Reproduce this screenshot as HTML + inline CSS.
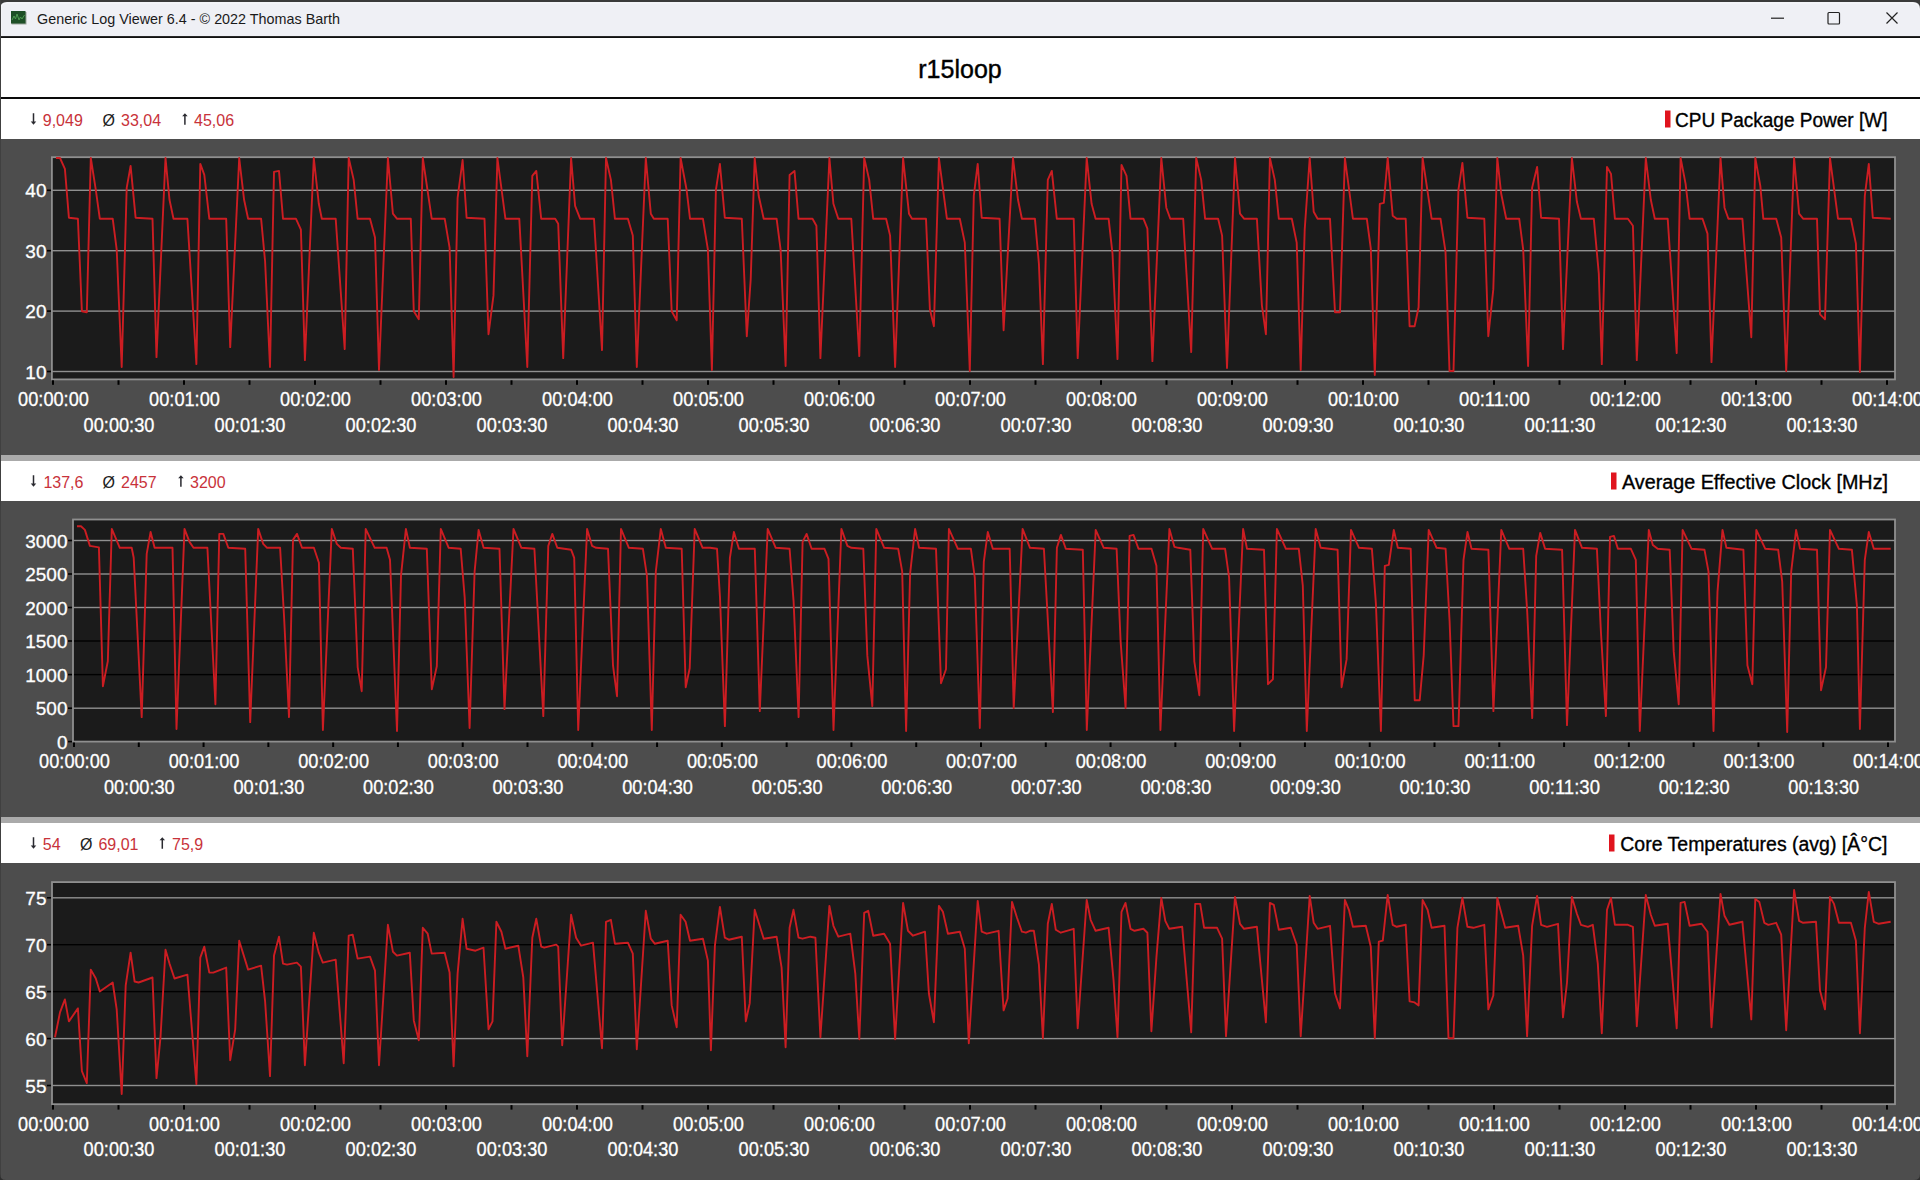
<!DOCTYPE html>
<html><head><meta charset="utf-8"><style>
html,body{margin:0;padding:0;width:1920px;height:1180px;overflow:hidden;background:#4d4d4d;}
svg{position:absolute;left:0;top:0;display:block;}
</style></head><body>
<svg width="1920" height="1180" viewBox="0 0 1920 1180">
<rect x="0" y="0" width="1920" height="1180" fill="#4d4d4d"/>
<rect x="0" y="0" width="1920" height="12" fill="#3a3a3a"/>
<path d="M0 36 V9 Q0 2 7 2 H1913 Q1920 2 1920 9 V36 Z" fill="#eff0f5"/>
<path d="M1 36 V9.5 Q1 3 7.5 3 H1912 Q1919 3 1919 9.5" fill="none" stroke="#ffffff" stroke-width="0.8" opacity="0.7"/>
<rect x="0" y="36.4" width="1920" height="1.6" fill="#111"/>
<rect x="0" y="38" width="1920" height="59" fill="#ffffff"/>
<rect x="0" y="97" width="1920" height="2" fill="#0a0a0a"/>
<rect x="0" y="99" width="1920" height="40" fill="#ffffff"/>
<rect x="0" y="461" width="1920" height="40" fill="#ffffff"/>
<rect x="0" y="455" width="1920" height="6" fill="#aaaaaa"/>
<rect x="0" y="823" width="1920" height="40" fill="#ffffff"/>
<rect x="0" y="817" width="1920" height="6" fill="#aaaaaa"/>
<rect x="0" y="0" width="1" height="1180" fill="#404040"/>
<path d="M0 1180 V1174 Q0 1180 6 1180 Z" fill="#2e2e2e"/>
<path d="M1920 1180 V1174 Q1920 1180 1914 1180 Z" fill="#2e2e2e"/>
<rect x="11.5" y="12" width="15" height="12.5" fill="#9aa39a"/>
<rect x="11" y="11" width="14.5" height="12.5" fill="#1d4f26"/>
<path d="M12 20 L14 16 L15.5 19 L17 14 L19 20 L20.5 17 L22 19 L24.5 15" fill="none" stroke="#4f9c52" stroke-width="1"/>
<text x="37" y="24" font-size="15" fill="#1a1a1a" textLength="303" lengthAdjust="spacingAndGlyphs" font-family='"Liberation Sans", sans-serif'>Generic Log Viewer 6.4 - © 2022 Thomas Barth</text>
<rect x="1771" y="17.6" width="13" height="1.2" fill="#222"/>
<rect x="1828" y="12.5" width="11.5" height="11.5" fill="none" stroke="#222" stroke-width="1.2" rx="1"/>
<path d="M1886.5 12.5 L1897.5 23.5 M1897.5 12.5 L1886.5 23.5" stroke="#222" stroke-width="1.2"/>
<text x="960" y="77.5" font-size="25" text-anchor="middle" fill="#000" stroke="#000" stroke-width="0.4" font-family='"Liberation Sans", sans-serif'>r15loop</text>
<path d="M32.75 113.2 h1.5 v8.4 h2 l-2.75 3.1 l-2.75 -3.1 h2 z" fill="#2a2a30"/>
<text x="42.75" y="125.6" font-size="16" fill="#c8323a" font-family='"Liberation Sans", sans-serif'>9,049</text>
<text x="102.5" y="125.6" font-size="16" fill="#222" font-family='"Liberation Sans", sans-serif'>Ø</text>
<text x="121" y="125.6" font-size="16" fill="#c8323a" font-family='"Liberation Sans", sans-serif'>33,04</text>
<path d="M184.15 124.7 h1.5 v-8.4 h2 l-2.75 -3.1 l-2.75 3.1 h2 z" fill="#2a2a30"/>
<text x="194" y="125.6" font-size="16" fill="#c8323a" font-family='"Liberation Sans", sans-serif'>45,06</text>
<text x="1675" y="126.8" font-size="20" textLength="212.5" lengthAdjust="spacingAndGlyphs" fill="#000" stroke="#000" stroke-width="0.35" font-family='"Liberation Sans", sans-serif'>CPU Package Power [W]</text>
<rect x="1665" y="110.5" width="5.5" height="17" fill="#e0141e"/>
<rect x="51.9" y="157.2" width="1843.1" height="222.2" fill="#1b1b1b"/>
<rect x="51.9" y="189.60000000000002" width="1843.1" height="1.4" fill="#8f8f8f"/>
<rect x="46.9" y="189.5" width="4.5" height="1.6" fill="#000"/>
<text x="46.5" y="197.3" font-size="19" text-anchor="end" fill="#fff" stroke="#fff" stroke-width="0.3" font-family='"Liberation Sans", sans-serif'>40</text>
<rect x="51.9" y="250.0" width="1843.1" height="1.4" fill="#8f8f8f"/>
<rect x="46.9" y="249.89999999999998" width="4.5" height="1.6" fill="#000"/>
<text x="46.5" y="257.7" font-size="19" text-anchor="end" fill="#fff" stroke="#fff" stroke-width="0.3" font-family='"Liberation Sans", sans-serif'>30</text>
<rect x="51.9" y="310.40000000000003" width="1843.1" height="1.4" fill="#8f8f8f"/>
<rect x="46.9" y="310.3" width="4.5" height="1.6" fill="#000"/>
<text x="46.5" y="318.1" font-size="19" text-anchor="end" fill="#fff" stroke="#fff" stroke-width="0.3" font-family='"Liberation Sans", sans-serif'>20</text>
<rect x="51.9" y="370.8" width="1843.1" height="1.4" fill="#8f8f8f"/>
<rect x="46.9" y="370.7" width="4.5" height="1.6" fill="#000"/>
<text x="46.5" y="378.5" font-size="19" text-anchor="end" fill="#fff" stroke="#fff" stroke-width="0.3" font-family='"Liberation Sans", sans-serif'>10</text>
<rect x="51.9" y="157.2" width="1843.1" height="222.2" fill="none" stroke="#8f8f8f" stroke-width="1.8"/>
<rect x="52.0" y="380.29999999999995" width="2" height="4.5" fill="#000"/>
<text x="53.5" y="406.2" font-size="19.5" text-anchor="middle" textLength="70.8" lengthAdjust="spacingAndGlyphs" fill="#fff" stroke="#fff" stroke-width="0.3" font-family='"Liberation Sans", sans-serif'>00:00:00</text>
<rect x="117.5" y="380.29999999999995" width="2" height="4.5" fill="#000"/>
<text x="119.0" y="431.5" font-size="19.5" text-anchor="middle" textLength="70.8" lengthAdjust="spacingAndGlyphs" fill="#fff" stroke="#fff" stroke-width="0.3" font-family='"Liberation Sans", sans-serif'>00:00:30</text>
<rect x="183.0" y="380.29999999999995" width="2" height="4.5" fill="#000"/>
<text x="184.5" y="406.2" font-size="19.5" text-anchor="middle" textLength="70.8" lengthAdjust="spacingAndGlyphs" fill="#fff" stroke="#fff" stroke-width="0.3" font-family='"Liberation Sans", sans-serif'>00:01:00</text>
<rect x="248.5" y="380.29999999999995" width="2" height="4.5" fill="#000"/>
<text x="250.0" y="431.5" font-size="19.5" text-anchor="middle" textLength="70.8" lengthAdjust="spacingAndGlyphs" fill="#fff" stroke="#fff" stroke-width="0.3" font-family='"Liberation Sans", sans-serif'>00:01:30</text>
<rect x="314.0" y="380.29999999999995" width="2" height="4.5" fill="#000"/>
<text x="315.5" y="406.2" font-size="19.5" text-anchor="middle" textLength="70.8" lengthAdjust="spacingAndGlyphs" fill="#fff" stroke="#fff" stroke-width="0.3" font-family='"Liberation Sans", sans-serif'>00:02:00</text>
<rect x="379.5" y="380.29999999999995" width="2" height="4.5" fill="#000"/>
<text x="381.0" y="431.5" font-size="19.5" text-anchor="middle" textLength="70.8" lengthAdjust="spacingAndGlyphs" fill="#fff" stroke="#fff" stroke-width="0.3" font-family='"Liberation Sans", sans-serif'>00:02:30</text>
<rect x="445.0" y="380.29999999999995" width="2" height="4.5" fill="#000"/>
<text x="446.5" y="406.2" font-size="19.5" text-anchor="middle" textLength="70.8" lengthAdjust="spacingAndGlyphs" fill="#fff" stroke="#fff" stroke-width="0.3" font-family='"Liberation Sans", sans-serif'>00:03:00</text>
<rect x="510.5" y="380.29999999999995" width="2" height="4.5" fill="#000"/>
<text x="512.0" y="431.5" font-size="19.5" text-anchor="middle" textLength="70.8" lengthAdjust="spacingAndGlyphs" fill="#fff" stroke="#fff" stroke-width="0.3" font-family='"Liberation Sans", sans-serif'>00:03:30</text>
<rect x="576.0" y="380.29999999999995" width="2" height="4.5" fill="#000"/>
<text x="577.5" y="406.2" font-size="19.5" text-anchor="middle" textLength="70.8" lengthAdjust="spacingAndGlyphs" fill="#fff" stroke="#fff" stroke-width="0.3" font-family='"Liberation Sans", sans-serif'>00:04:00</text>
<rect x="641.5" y="380.29999999999995" width="2" height="4.5" fill="#000"/>
<text x="643.0" y="431.5" font-size="19.5" text-anchor="middle" textLength="70.8" lengthAdjust="spacingAndGlyphs" fill="#fff" stroke="#fff" stroke-width="0.3" font-family='"Liberation Sans", sans-serif'>00:04:30</text>
<rect x="707.0" y="380.29999999999995" width="2" height="4.5" fill="#000"/>
<text x="708.5" y="406.2" font-size="19.5" text-anchor="middle" textLength="70.8" lengthAdjust="spacingAndGlyphs" fill="#fff" stroke="#fff" stroke-width="0.3" font-family='"Liberation Sans", sans-serif'>00:05:00</text>
<rect x="772.5" y="380.29999999999995" width="2" height="4.5" fill="#000"/>
<text x="774.0" y="431.5" font-size="19.5" text-anchor="middle" textLength="70.8" lengthAdjust="spacingAndGlyphs" fill="#fff" stroke="#fff" stroke-width="0.3" font-family='"Liberation Sans", sans-serif'>00:05:30</text>
<rect x="838.0" y="380.29999999999995" width="2" height="4.5" fill="#000"/>
<text x="839.5" y="406.2" font-size="19.5" text-anchor="middle" textLength="70.8" lengthAdjust="spacingAndGlyphs" fill="#fff" stroke="#fff" stroke-width="0.3" font-family='"Liberation Sans", sans-serif'>00:06:00</text>
<rect x="903.5" y="380.29999999999995" width="2" height="4.5" fill="#000"/>
<text x="905.0" y="431.5" font-size="19.5" text-anchor="middle" textLength="70.8" lengthAdjust="spacingAndGlyphs" fill="#fff" stroke="#fff" stroke-width="0.3" font-family='"Liberation Sans", sans-serif'>00:06:30</text>
<rect x="969.0" y="380.29999999999995" width="2" height="4.5" fill="#000"/>
<text x="970.5" y="406.2" font-size="19.5" text-anchor="middle" textLength="70.8" lengthAdjust="spacingAndGlyphs" fill="#fff" stroke="#fff" stroke-width="0.3" font-family='"Liberation Sans", sans-serif'>00:07:00</text>
<rect x="1034.5" y="380.29999999999995" width="2" height="4.5" fill="#000"/>
<text x="1036.0" y="431.5" font-size="19.5" text-anchor="middle" textLength="70.8" lengthAdjust="spacingAndGlyphs" fill="#fff" stroke="#fff" stroke-width="0.3" font-family='"Liberation Sans", sans-serif'>00:07:30</text>
<rect x="1100.0" y="380.29999999999995" width="2" height="4.5" fill="#000"/>
<text x="1101.5" y="406.2" font-size="19.5" text-anchor="middle" textLength="70.8" lengthAdjust="spacingAndGlyphs" fill="#fff" stroke="#fff" stroke-width="0.3" font-family='"Liberation Sans", sans-serif'>00:08:00</text>
<rect x="1165.5" y="380.29999999999995" width="2" height="4.5" fill="#000"/>
<text x="1167.0" y="431.5" font-size="19.5" text-anchor="middle" textLength="70.8" lengthAdjust="spacingAndGlyphs" fill="#fff" stroke="#fff" stroke-width="0.3" font-family='"Liberation Sans", sans-serif'>00:08:30</text>
<rect x="1231.0" y="380.29999999999995" width="2" height="4.5" fill="#000"/>
<text x="1232.5" y="406.2" font-size="19.5" text-anchor="middle" textLength="70.8" lengthAdjust="spacingAndGlyphs" fill="#fff" stroke="#fff" stroke-width="0.3" font-family='"Liberation Sans", sans-serif'>00:09:00</text>
<rect x="1296.5" y="380.29999999999995" width="2" height="4.5" fill="#000"/>
<text x="1298.0" y="431.5" font-size="19.5" text-anchor="middle" textLength="70.8" lengthAdjust="spacingAndGlyphs" fill="#fff" stroke="#fff" stroke-width="0.3" font-family='"Liberation Sans", sans-serif'>00:09:30</text>
<rect x="1362.0" y="380.29999999999995" width="2" height="4.5" fill="#000"/>
<text x="1363.5" y="406.2" font-size="19.5" text-anchor="middle" textLength="70.8" lengthAdjust="spacingAndGlyphs" fill="#fff" stroke="#fff" stroke-width="0.3" font-family='"Liberation Sans", sans-serif'>00:10:00</text>
<rect x="1427.5" y="380.29999999999995" width="2" height="4.5" fill="#000"/>
<text x="1429.0" y="431.5" font-size="19.5" text-anchor="middle" textLength="70.8" lengthAdjust="spacingAndGlyphs" fill="#fff" stroke="#fff" stroke-width="0.3" font-family='"Liberation Sans", sans-serif'>00:10:30</text>
<rect x="1493.0" y="380.29999999999995" width="2" height="4.5" fill="#000"/>
<text x="1494.5" y="406.2" font-size="19.5" text-anchor="middle" textLength="70.8" lengthAdjust="spacingAndGlyphs" fill="#fff" stroke="#fff" stroke-width="0.3" font-family='"Liberation Sans", sans-serif'>00:11:00</text>
<rect x="1558.5" y="380.29999999999995" width="2" height="4.5" fill="#000"/>
<text x="1560.0" y="431.5" font-size="19.5" text-anchor="middle" textLength="70.8" lengthAdjust="spacingAndGlyphs" fill="#fff" stroke="#fff" stroke-width="0.3" font-family='"Liberation Sans", sans-serif'>00:11:30</text>
<rect x="1624.0" y="380.29999999999995" width="2" height="4.5" fill="#000"/>
<text x="1625.5" y="406.2" font-size="19.5" text-anchor="middle" textLength="70.8" lengthAdjust="spacingAndGlyphs" fill="#fff" stroke="#fff" stroke-width="0.3" font-family='"Liberation Sans", sans-serif'>00:12:00</text>
<rect x="1689.5" y="380.29999999999995" width="2" height="4.5" fill="#000"/>
<text x="1691.0" y="431.5" font-size="19.5" text-anchor="middle" textLength="70.8" lengthAdjust="spacingAndGlyphs" fill="#fff" stroke="#fff" stroke-width="0.3" font-family='"Liberation Sans", sans-serif'>00:12:30</text>
<rect x="1755.0" y="380.29999999999995" width="2" height="4.5" fill="#000"/>
<text x="1756.5" y="406.2" font-size="19.5" text-anchor="middle" textLength="70.8" lengthAdjust="spacingAndGlyphs" fill="#fff" stroke="#fff" stroke-width="0.3" font-family='"Liberation Sans", sans-serif'>00:13:00</text>
<rect x="1820.5" y="380.29999999999995" width="2" height="4.5" fill="#000"/>
<text x="1822.0" y="431.5" font-size="19.5" text-anchor="middle" textLength="70.8" lengthAdjust="spacingAndGlyphs" fill="#fff" stroke="#fff" stroke-width="0.3" font-family='"Liberation Sans", sans-serif'>00:13:30</text>
<rect x="1886.0" y="380.29999999999995" width="2" height="4.5" fill="#000"/>
<text x="1887.5" y="406.2" font-size="19.5" text-anchor="middle" textLength="70.8" lengthAdjust="spacingAndGlyphs" fill="#fff" stroke="#fff" stroke-width="0.3" font-family='"Liberation Sans", sans-serif'>00:14:00</text>
<polyline points="56.0,158.0 60.0,158.0 64.9,168.9 68.9,217.7 77.9,218.7 81.9,311.3 86.8,312.3 90.8,158.0 95.8,189.8 99.8,218.7 112.7,218.7 116.7,249.6 121.7,367.0 126.7,187.8 130.6,165.9 135.6,217.7 152.5,218.7 156.5,357.1 165.5,158.0 169.5,199.8 173.5,218.7 187.4,218.7 196.4,364.1 200.3,163.9 204.3,174.9 209.3,218.7 226.2,218.7 230.2,347.1 239.2,158.0 244.1,199.8 248.1,218.7 261.1,218.7 265.1,261.5 270.0,367.0 274.0,171.9 279.0,170.9 283.0,218.7 295.9,218.7 300.9,229.6 304.9,360.1 313.8,158.0 318.8,203.8 321.8,218.7 335.7,218.7 344.7,349.1 348.7,158.0 353.7,179.9 357.6,218.7 370.0,218.7 375.0,237.6 379.0,370.0 387.9,158.0 392.9,213.7 396.9,218.7 410.8,218.7 413.8,311.3 418.8,319.3 422.8,158.0 431.7,218.7 444.7,218.7 449.6,247.6 453.6,377.0 457.6,197.8 462.6,160.0 466.6,217.7 484.5,218.7 488.5,334.2 493.5,295.4 497.4,158.0 505.4,218.7 519.3,218.7 527.3,367.0 532.3,175.9 536.3,170.9 541.2,218.7 555.2,218.7 558.2,223.7 563.2,358.1 571.1,158.0 575.1,205.8 580.1,218.7 594.0,218.7 602.0,350.1 606.0,158.0 610.9,179.9 614.9,218.7 627.9,218.7 632.8,235.6 636.8,367.0 645.8,158.0 650.8,213.7 653.8,218.7 667.7,218.7 671.7,311.3 676.7,320.3 680.6,158.0 686.6,189.8 690.0,218.7 702.9,218.7 707.9,249.6 711.9,370.0 715.9,189.8 719.9,163.9 724.8,217.7 741.8,218.7 746.8,336.2 750.7,279.4 754.7,158.0 758.7,195.8 763.7,218.7 776.6,218.7 780.6,249.6 785.6,366.0 789.6,174.9 794.5,170.9 798.5,218.7 812.5,218.7 816.4,225.7 820.4,358.1 829.4,158.0 833.4,203.8 838.3,218.7 851.3,218.7 859.3,356.1 864.2,158.0 869.2,179.9 873.2,218.7 886.1,218.7 890.1,235.6 895.1,367.0 903.1,158.0 909.0,213.7 912.0,218.7 926.0,218.7 929.9,309.3 933.9,326.2 938.9,158.0 946.9,218.7 959.8,218.7 964.8,242.6 969.8,371.0 973.8,195.8 977.7,163.9 981.7,217.7 999.6,218.7 1003.6,330.2 1013.0,158.0 1018.0,199.8 1021.9,218.7 1034.9,218.7 1038.9,263.5 1042.9,364.1 1047.8,179.9 1051.8,170.9 1056.8,218.7 1073.7,218.7 1077.7,358.1 1086.7,158.0 1091.6,203.8 1095.6,218.7 1108.6,218.7 1112.5,253.5 1117.5,359.1 1121.5,164.9 1126.5,175.9 1130.5,218.7 1143.4,218.7 1147.4,228.7 1152.4,361.1 1161.3,158.0 1166.3,207.7 1170.3,218.7 1183.2,218.7 1191.2,352.1 1196.2,158.0 1201.2,179.9 1205.1,218.7 1218.1,218.7 1222.1,235.6 1227.0,368.0 1235.0,158.0 1240.0,213.7 1244.0,218.7 1256.9,218.7 1261.9,305.3 1265.9,334.2 1269.9,158.0 1274.8,179.9 1278.8,218.7 1291.8,218.7 1296.7,242.6 1300.7,370.0 1304.7,229.6 1309.7,158.0 1313.7,211.7 1317.6,218.7 1330.0,218.7 1335.0,312.3 1340.0,312.3 1344.9,158.0 1352.9,218.7 1366.8,218.7 1370.8,248.6 1374.8,375.0 1379.8,203.8 1383.8,202.8 1387.7,158.0 1392.7,215.7 1396.7,218.7 1405.7,218.7 1409.6,326.2 1414.6,326.2 1418.6,307.3 1422.6,158.0 1431.6,218.7 1440.5,218.7 1445.5,251.6 1449.5,371.0 1453.5,371.0 1458.4,189.8 1462.4,162.9 1467.4,217.7 1484.3,218.7 1488.3,336.2 1493.3,289.4 1497.3,158.0 1501.2,193.8 1506.2,218.7 1519.2,218.7 1523.2,249.6 1528.1,366.0 1532.1,187.8 1537.1,166.9 1541.1,217.7 1559.0,218.7 1563.0,349.1 1571.9,158.0 1576.9,201.8 1580.9,218.7 1593.8,218.7 1598.8,273.5 1601.8,364.1 1607.0,166.9 1611.0,173.9 1614.9,218.7 1627.9,218.7 1632.9,225.7 1636.8,360.1 1645.8,158.0 1650.8,199.8 1654.8,218.7 1667.7,218.7 1676.7,353.1 1680.6,158.0 1685.6,183.9 1689.6,218.7 1702.5,218.7 1707.5,233.6 1711.5,362.1 1720.5,158.0 1724.5,207.7 1728.4,218.7 1742.4,218.7 1751.3,337.2 1755.3,158.0 1760.3,185.8 1763.3,218.7 1776.2,218.7 1781.2,237.6 1786.2,371.0 1794.1,158.0 1799.1,213.7 1803.1,218.7 1817.0,218.7 1820.0,314.3 1825.0,319.3 1830.0,158.0 1838.0,218.7 1850.9,218.7 1855.9,243.6 1859.9,372.0 1864.8,195.8 1868.8,163.9 1872.8,217.7 1890.7,218.7" fill="none" stroke="#cc1d22" stroke-width="1.9" stroke-linejoin="round"/>
<path d="M32.75 475.2 h1.5 v8.4 h2 l-2.75 3.1 l-2.75 -3.1 h2 z" fill="#2a2a30"/>
<text x="43.4" y="487.6" font-size="16" fill="#c8323a" font-family='"Liberation Sans", sans-serif'>137,6</text>
<text x="102.5" y="487.6" font-size="16" fill="#222" font-family='"Liberation Sans", sans-serif'>Ø</text>
<text x="121" y="487.6" font-size="16" fill="#c8323a" font-family='"Liberation Sans", sans-serif'>2457</text>
<path d="M180.15 486.7 h1.5 v-8.4 h2 l-2.75 -3.1 l-2.75 3.1 h2 z" fill="#2a2a30"/>
<text x="190" y="487.6" font-size="16" fill="#c8323a" font-family='"Liberation Sans", sans-serif'>3200</text>
<text x="1622" y="488.8" font-size="20" textLength="266" lengthAdjust="spacingAndGlyphs" fill="#000" stroke="#000" stroke-width="0.35" font-family='"Liberation Sans", sans-serif'>Average Effective Clock [MHz]</text>
<rect x="1611" y="472.5" width="5.5" height="17" fill="#e0141e"/>
<rect x="73" y="519.5" width="1822" height="222.10000000000002" fill="#1b1b1b"/>
<rect x="73" y="539.8" width="1822" height="1.4" fill="#8f8f8f"/>
<rect x="68" y="539.7" width="4.5" height="1.6" fill="#000"/>
<text x="67.5" y="547.5" font-size="19" text-anchor="end" fill="#fff" stroke="#fff" stroke-width="0.3" font-family='"Liberation Sans", sans-serif'>3000</text>
<rect x="73" y="573.3" width="1822" height="1.4" fill="#8f8f8f"/>
<rect x="68" y="573.2" width="4.5" height="1.6" fill="#000"/>
<text x="67.5" y="581.0" font-size="19" text-anchor="end" fill="#fff" stroke="#fff" stroke-width="0.3" font-family='"Liberation Sans", sans-serif'>2500</text>
<rect x="73" y="606.8" width="1822" height="1.4" fill="#8f8f8f"/>
<rect x="68" y="606.7" width="4.5" height="1.6" fill="#000"/>
<text x="67.5" y="614.5" font-size="19" text-anchor="end" fill="#fff" stroke="#fff" stroke-width="0.3" font-family='"Liberation Sans", sans-serif'>2000</text>
<rect x="73" y="640.3" width="1822" height="1.4" fill="#000000"/>
<rect x="68" y="640.2" width="4.5" height="1.6" fill="#000"/>
<text x="67.5" y="648.0" font-size="19" text-anchor="end" fill="#fff" stroke="#fff" stroke-width="0.3" font-family='"Liberation Sans", sans-serif'>1500</text>
<rect x="73" y="673.9" width="1822" height="1.4" fill="#000000"/>
<rect x="68" y="673.8000000000001" width="4.5" height="1.6" fill="#000"/>
<text x="67.5" y="681.6" font-size="19" text-anchor="end" fill="#fff" stroke="#fff" stroke-width="0.3" font-family='"Liberation Sans", sans-serif'>1000</text>
<rect x="73" y="707.5" width="1822" height="1.4" fill="#8f8f8f"/>
<rect x="68" y="707.4000000000001" width="4.5" height="1.6" fill="#000"/>
<text x="67.5" y="715.2" font-size="19" text-anchor="end" fill="#fff" stroke="#fff" stroke-width="0.3" font-family='"Liberation Sans", sans-serif'>500</text>
<rect x="68" y="740.8000000000001" width="4.5" height="1.6" fill="#000"/>
<text x="67.5" y="748.6" font-size="19" text-anchor="end" fill="#fff" stroke="#fff" stroke-width="0.3" font-family='"Liberation Sans", sans-serif'>0</text>
<rect x="73" y="519.5" width="1822" height="222.10000000000002" fill="none" stroke="#8f8f8f" stroke-width="1.8"/>
<rect x="73.0" y="742.5" width="2" height="4.5" fill="#000"/>
<text x="74.5" y="768.4" font-size="19.5" text-anchor="middle" textLength="70.8" lengthAdjust="spacingAndGlyphs" fill="#fff" stroke="#fff" stroke-width="0.3" font-family='"Liberation Sans", sans-serif'>00:00:00</text>
<rect x="137.78571428571428" y="742.5" width="2" height="4.5" fill="#000"/>
<text x="139.28571428571428" y="793.7" font-size="19.5" text-anchor="middle" textLength="70.8" lengthAdjust="spacingAndGlyphs" fill="#fff" stroke="#fff" stroke-width="0.3" font-family='"Liberation Sans", sans-serif'>00:00:30</text>
<rect x="202.57142857142858" y="742.5" width="2" height="4.5" fill="#000"/>
<text x="204.07142857142858" y="768.4" font-size="19.5" text-anchor="middle" textLength="70.8" lengthAdjust="spacingAndGlyphs" fill="#fff" stroke="#fff" stroke-width="0.3" font-family='"Liberation Sans", sans-serif'>00:01:00</text>
<rect x="267.3571428571429" y="742.5" width="2" height="4.5" fill="#000"/>
<text x="268.8571428571429" y="793.7" font-size="19.5" text-anchor="middle" textLength="70.8" lengthAdjust="spacingAndGlyphs" fill="#fff" stroke="#fff" stroke-width="0.3" font-family='"Liberation Sans", sans-serif'>00:01:30</text>
<rect x="332.14285714285717" y="742.5" width="2" height="4.5" fill="#000"/>
<text x="333.64285714285717" y="768.4" font-size="19.5" text-anchor="middle" textLength="70.8" lengthAdjust="spacingAndGlyphs" fill="#fff" stroke="#fff" stroke-width="0.3" font-family='"Liberation Sans", sans-serif'>00:02:00</text>
<rect x="396.92857142857144" y="742.5" width="2" height="4.5" fill="#000"/>
<text x="398.42857142857144" y="793.7" font-size="19.5" text-anchor="middle" textLength="70.8" lengthAdjust="spacingAndGlyphs" fill="#fff" stroke="#fff" stroke-width="0.3" font-family='"Liberation Sans", sans-serif'>00:02:30</text>
<rect x="461.7142857142857" y="742.5" width="2" height="4.5" fill="#000"/>
<text x="463.2142857142857" y="768.4" font-size="19.5" text-anchor="middle" textLength="70.8" lengthAdjust="spacingAndGlyphs" fill="#fff" stroke="#fff" stroke-width="0.3" font-family='"Liberation Sans", sans-serif'>00:03:00</text>
<rect x="526.5" y="742.5" width="2" height="4.5" fill="#000"/>
<text x="528.0" y="793.7" font-size="19.5" text-anchor="middle" textLength="70.8" lengthAdjust="spacingAndGlyphs" fill="#fff" stroke="#fff" stroke-width="0.3" font-family='"Liberation Sans", sans-serif'>00:03:30</text>
<rect x="591.2857142857143" y="742.5" width="2" height="4.5" fill="#000"/>
<text x="592.7857142857143" y="768.4" font-size="19.5" text-anchor="middle" textLength="70.8" lengthAdjust="spacingAndGlyphs" fill="#fff" stroke="#fff" stroke-width="0.3" font-family='"Liberation Sans", sans-serif'>00:04:00</text>
<rect x="656.0714285714286" y="742.5" width="2" height="4.5" fill="#000"/>
<text x="657.5714285714286" y="793.7" font-size="19.5" text-anchor="middle" textLength="70.8" lengthAdjust="spacingAndGlyphs" fill="#fff" stroke="#fff" stroke-width="0.3" font-family='"Liberation Sans", sans-serif'>00:04:30</text>
<rect x="720.8571428571429" y="742.5" width="2" height="4.5" fill="#000"/>
<text x="722.3571428571429" y="768.4" font-size="19.5" text-anchor="middle" textLength="70.8" lengthAdjust="spacingAndGlyphs" fill="#fff" stroke="#fff" stroke-width="0.3" font-family='"Liberation Sans", sans-serif'>00:05:00</text>
<rect x="785.6428571428571" y="742.5" width="2" height="4.5" fill="#000"/>
<text x="787.1428571428571" y="793.7" font-size="19.5" text-anchor="middle" textLength="70.8" lengthAdjust="spacingAndGlyphs" fill="#fff" stroke="#fff" stroke-width="0.3" font-family='"Liberation Sans", sans-serif'>00:05:30</text>
<rect x="850.4285714285714" y="742.5" width="2" height="4.5" fill="#000"/>
<text x="851.9285714285714" y="768.4" font-size="19.5" text-anchor="middle" textLength="70.8" lengthAdjust="spacingAndGlyphs" fill="#fff" stroke="#fff" stroke-width="0.3" font-family='"Liberation Sans", sans-serif'>00:06:00</text>
<rect x="915.2142857142857" y="742.5" width="2" height="4.5" fill="#000"/>
<text x="916.7142857142857" y="793.7" font-size="19.5" text-anchor="middle" textLength="70.8" lengthAdjust="spacingAndGlyphs" fill="#fff" stroke="#fff" stroke-width="0.3" font-family='"Liberation Sans", sans-serif'>00:06:30</text>
<rect x="980.0" y="742.5" width="2" height="4.5" fill="#000"/>
<text x="981.5" y="768.4" font-size="19.5" text-anchor="middle" textLength="70.8" lengthAdjust="spacingAndGlyphs" fill="#fff" stroke="#fff" stroke-width="0.3" font-family='"Liberation Sans", sans-serif'>00:07:00</text>
<rect x="1044.7857142857142" y="742.5" width="2" height="4.5" fill="#000"/>
<text x="1046.2857142857142" y="793.7" font-size="19.5" text-anchor="middle" textLength="70.8" lengthAdjust="spacingAndGlyphs" fill="#fff" stroke="#fff" stroke-width="0.3" font-family='"Liberation Sans", sans-serif'>00:07:30</text>
<rect x="1109.5714285714287" y="742.5" width="2" height="4.5" fill="#000"/>
<text x="1111.0714285714287" y="768.4" font-size="19.5" text-anchor="middle" textLength="70.8" lengthAdjust="spacingAndGlyphs" fill="#fff" stroke="#fff" stroke-width="0.3" font-family='"Liberation Sans", sans-serif'>00:08:00</text>
<rect x="1174.357142857143" y="742.5" width="2" height="4.5" fill="#000"/>
<text x="1175.857142857143" y="793.7" font-size="19.5" text-anchor="middle" textLength="70.8" lengthAdjust="spacingAndGlyphs" fill="#fff" stroke="#fff" stroke-width="0.3" font-family='"Liberation Sans", sans-serif'>00:08:30</text>
<rect x="1239.142857142857" y="742.5" width="2" height="4.5" fill="#000"/>
<text x="1240.642857142857" y="768.4" font-size="19.5" text-anchor="middle" textLength="70.8" lengthAdjust="spacingAndGlyphs" fill="#fff" stroke="#fff" stroke-width="0.3" font-family='"Liberation Sans", sans-serif'>00:09:00</text>
<rect x="1303.9285714285713" y="742.5" width="2" height="4.5" fill="#000"/>
<text x="1305.4285714285713" y="793.7" font-size="19.5" text-anchor="middle" textLength="70.8" lengthAdjust="spacingAndGlyphs" fill="#fff" stroke="#fff" stroke-width="0.3" font-family='"Liberation Sans", sans-serif'>00:09:30</text>
<rect x="1368.7142857142858" y="742.5" width="2" height="4.5" fill="#000"/>
<text x="1370.2142857142858" y="768.4" font-size="19.5" text-anchor="middle" textLength="70.8" lengthAdjust="spacingAndGlyphs" fill="#fff" stroke="#fff" stroke-width="0.3" font-family='"Liberation Sans", sans-serif'>00:10:00</text>
<rect x="1433.5" y="742.5" width="2" height="4.5" fill="#000"/>
<text x="1435.0" y="793.7" font-size="19.5" text-anchor="middle" textLength="70.8" lengthAdjust="spacingAndGlyphs" fill="#fff" stroke="#fff" stroke-width="0.3" font-family='"Liberation Sans", sans-serif'>00:10:30</text>
<rect x="1498.2857142857142" y="742.5" width="2" height="4.5" fill="#000"/>
<text x="1499.7857142857142" y="768.4" font-size="19.5" text-anchor="middle" textLength="70.8" lengthAdjust="spacingAndGlyphs" fill="#fff" stroke="#fff" stroke-width="0.3" font-family='"Liberation Sans", sans-serif'>00:11:00</text>
<rect x="1563.0714285714287" y="742.5" width="2" height="4.5" fill="#000"/>
<text x="1564.5714285714287" y="793.7" font-size="19.5" text-anchor="middle" textLength="70.8" lengthAdjust="spacingAndGlyphs" fill="#fff" stroke="#fff" stroke-width="0.3" font-family='"Liberation Sans", sans-serif'>00:11:30</text>
<rect x="1627.857142857143" y="742.5" width="2" height="4.5" fill="#000"/>
<text x="1629.357142857143" y="768.4" font-size="19.5" text-anchor="middle" textLength="70.8" lengthAdjust="spacingAndGlyphs" fill="#fff" stroke="#fff" stroke-width="0.3" font-family='"Liberation Sans", sans-serif'>00:12:00</text>
<rect x="1692.642857142857" y="742.5" width="2" height="4.5" fill="#000"/>
<text x="1694.142857142857" y="793.7" font-size="19.5" text-anchor="middle" textLength="70.8" lengthAdjust="spacingAndGlyphs" fill="#fff" stroke="#fff" stroke-width="0.3" font-family='"Liberation Sans", sans-serif'>00:12:30</text>
<rect x="1757.4285714285713" y="742.5" width="2" height="4.5" fill="#000"/>
<text x="1758.9285714285713" y="768.4" font-size="19.5" text-anchor="middle" textLength="70.8" lengthAdjust="spacingAndGlyphs" fill="#fff" stroke="#fff" stroke-width="0.3" font-family='"Liberation Sans", sans-serif'>00:13:00</text>
<rect x="1822.2142857142858" y="742.5" width="2" height="4.5" fill="#000"/>
<text x="1823.7142857142858" y="793.7" font-size="19.5" text-anchor="middle" textLength="70.8" lengthAdjust="spacingAndGlyphs" fill="#fff" stroke="#fff" stroke-width="0.3" font-family='"Liberation Sans", sans-serif'>00:13:30</text>
<rect x="1887.0" y="742.5" width="2" height="4.5" fill="#000"/>
<text x="1888.5" y="768.4" font-size="19.5" text-anchor="middle" textLength="70.8" lengthAdjust="spacingAndGlyphs" fill="#fff" stroke="#fff" stroke-width="0.3" font-family='"Liberation Sans", sans-serif'>00:14:00</text>
<polyline points="77.0,526.3 81.0,526.3 84.9,529.9 89.9,545.9 98.9,547.4 102.9,686.2 107.8,661.3 111.8,528.9 119.8,547.8 131.7,547.8 133.7,557.8 141.7,717.1 146.7,553.8 150.6,531.9 154.6,547.8 172.5,547.8 176.5,729.0 184.5,528.9 189.5,541.9 193.5,547.8 207.4,547.8 215.4,704.2 219.3,533.9 223.3,533.9 228.3,547.8 245.2,548.8 250.2,722.1 258.2,528.9 263.2,543.9 267.1,547.8 280.1,547.8 284.1,617.5 289.0,717.1 293.0,539.9 297.0,533.9 302.0,547.8 313.9,547.8 318.9,562.8 322.9,730.0 331.8,528.9 336.8,543.9 340.8,547.8 352.8,548.8 357.7,667.3 361.7,691.2 365.7,528.9 374.7,547.8 386.6,547.8 390.0,559.8 397.0,731.0 401.0,575.7 405.9,528.9 409.9,547.8 426.8,548.8 431.8,689.2 436.8,666.3 440.8,528.9 448.7,547.8 460.7,548.8 464.7,597.6 469.6,728.0 474.6,571.7 478.6,529.9 483.6,547.8 499.5,548.8 504.5,709.1 513.5,528.9 521.4,547.8 534.4,548.8 543.3,716.1 548.3,545.9 552.3,533.9 557.3,547.8 571.2,549.8 574.2,557.8 578.2,730.0 587.1,528.9 592.1,545.9 596.1,547.8 608.0,548.8 613.0,665.3 617.0,696.2 621.0,528.9 628.9,547.8 642.9,548.8 646.9,575.7 651.8,730.0 655.8,571.7 660.8,528.9 665.8,547.8 681.7,548.8 685.7,687.2 689.7,668.3 694.7,528.9 702.6,547.8 710.0,547.8 717.0,548.8 720.0,597.6 724.9,726.1 729.9,557.8 733.9,531.9 738.9,548.8 754.8,548.8 759.8,711.1 767.7,528.9 775.7,547.8 789.6,548.8 793.6,601.6 798.6,717.1 802.6,541.9 806.6,533.9 811.6,548.8 824.5,548.8 828.5,558.8 833.5,730.0 841.4,528.9 847.4,545.9 851.4,547.8 863.3,548.8 867.3,655.4 872.3,706.1 876.3,528.9 884.2,547.8 898.2,548.8 902.2,571.7 906.1,731.0 910.1,573.7 915.1,528.9 919.1,547.8 936.0,548.8 941.0,683.2 946.0,669.3 948.9,528.9 957.9,548.8 970.9,548.8 974.8,577.7 979.8,728.0 983.8,561.8 987.8,531.9 992.8,548.8 1009.7,548.8 1013.7,708.1 1022.6,528.9 1030.0,547.8 1043.9,548.8 1052.9,712.1 1056.9,547.8 1060.9,534.9 1065.8,548.8 1082.8,549.8 1086.8,730.0 1095.7,529.9 1103.7,547.8 1116.6,548.8 1120.6,641.4 1125.6,708.1 1129.6,535.9 1133.5,534.9 1138.5,548.8 1151.5,548.8 1156.4,565.8 1160.4,730.0 1169.4,528.9 1174.4,546.8 1178.3,547.8 1190.3,549.8 1194.3,661.3 1199.3,695.2 1203.2,528.9 1212.2,548.8 1225.1,548.8 1229.1,577.7 1234.1,731.0 1243.1,528.9 1247.0,548.8 1264.0,549.8 1268.0,684.2 1272.9,679.3 1276.9,528.9 1285.9,548.8 1298.8,548.8 1302.8,585.7 1306.8,731.0 1315.7,528.9 1320.7,547.8 1337.6,549.8 1341.6,687.2 1346.6,659.4 1351.0,529.9 1359.0,547.8 1371.9,548.8 1375.9,603.6 1380.9,731.0 1384.8,565.8 1388.8,564.8 1393.8,529.9 1397.8,547.8 1410.7,548.8 1414.7,700.2 1419.7,700.2 1423.7,655.4 1428.7,529.9 1436.6,547.8 1445.6,548.8 1449.6,621.5 1453.5,726.1 1458.5,726.1 1463.5,559.8 1467.5,531.9 1471.5,548.8 1488.4,549.8 1493.4,711.1 1501.3,529.9 1509.3,548.8 1523.2,548.8 1527.2,611.6 1532.2,718.1 1536.2,555.8 1540.2,532.9 1545.1,548.8 1562.1,549.8 1567.0,725.1 1575.0,529.9 1582.0,547.8 1596.9,548.8 1600.9,631.5 1605.9,716.1 1610.0,536.9 1613.9,535.9 1617.9,548.8 1630.9,548.8 1635.8,559.8 1639.8,731.0 1648.8,529.9 1652.8,544.9 1657.7,548.8 1669.7,549.8 1673.7,651.4 1678.7,704.2 1682.6,529.9 1691.6,548.8 1704.5,549.8 1708.5,571.7 1713.5,731.0 1717.5,591.6 1722.5,529.9 1726.4,547.8 1743.4,549.8 1747.4,665.3 1752.3,684.2 1756.3,529.9 1765.3,548.8 1778.2,549.8 1782.2,581.7 1787.2,732.0 1791.2,571.7 1796.1,529.9 1800.1,548.8 1817.0,549.8 1821.0,690.2 1826.0,667.3 1830.0,529.9 1838.9,548.8 1851.9,549.8 1856.9,605.6 1859.9,729.0 1864.8,559.8 1868.8,531.9 1873.8,548.8 1890.7,548.8" fill="none" stroke="#cc1d22" stroke-width="1.9" stroke-linejoin="round"/>
<path d="M32.75 837.2 h1.5 v8.4 h2 l-2.75 3.1 l-2.75 -3.1 h2 z" fill="#2a2a30"/>
<text x="42.75" y="849.6" font-size="16" fill="#c8323a" font-family='"Liberation Sans", sans-serif'>54</text>
<text x="80.1" y="849.6" font-size="16" fill="#222" font-family='"Liberation Sans", sans-serif'>Ø</text>
<text x="98.4" y="849.6" font-size="16" fill="#c8323a" font-family='"Liberation Sans", sans-serif'>69,01</text>
<path d="M161.55 848.7 h1.5 v-8.4 h2 l-2.75 -3.1 l-2.75 3.1 h2 z" fill="#2a2a30"/>
<text x="172" y="849.6" font-size="16" fill="#c8323a" font-family='"Liberation Sans", sans-serif'>75,9</text>
<text x="1620.3" y="850.8" font-size="20" textLength="267.2" lengthAdjust="spacingAndGlyphs" fill="#000" stroke="#000" stroke-width="0.35" font-family='"Liberation Sans", sans-serif'>Core Temperatures (avg) [Â°C]</text>
<rect x="1609" y="834.5" width="5.5" height="17" fill="#e0141e"/>
<rect x="52" y="882.1" width="1843" height="222.10000000000002" fill="#1b1b1b"/>
<rect x="52" y="897.0999999999999" width="1843" height="1.4" fill="#8f8f8f"/>
<rect x="47" y="897.0" width="4.5" height="1.6" fill="#000"/>
<text x="46.5" y="904.8" font-size="19" text-anchor="end" fill="#fff" stroke="#fff" stroke-width="0.3" font-family='"Liberation Sans", sans-serif'>75</text>
<rect x="52" y="944.0" width="1843" height="1.4" fill="#000000"/>
<rect x="47" y="943.9000000000001" width="4.5" height="1.6" fill="#000"/>
<text x="46.5" y="951.7" font-size="19" text-anchor="end" fill="#fff" stroke="#fff" stroke-width="0.3" font-family='"Liberation Sans", sans-serif'>70</text>
<rect x="52" y="990.9" width="1843" height="1.4" fill="#000000"/>
<rect x="47" y="990.8000000000001" width="4.5" height="1.6" fill="#000"/>
<text x="46.5" y="998.6" font-size="19" text-anchor="end" fill="#fff" stroke="#fff" stroke-width="0.3" font-family='"Liberation Sans", sans-serif'>65</text>
<rect x="52" y="1037.8999999999999" width="1843" height="1.4" fill="#8f8f8f"/>
<rect x="47" y="1037.8" width="4.5" height="1.6" fill="#000"/>
<text x="46.5" y="1045.6" font-size="19" text-anchor="end" fill="#fff" stroke="#fff" stroke-width="0.3" font-family='"Liberation Sans", sans-serif'>60</text>
<rect x="52" y="1084.8" width="1843" height="1.4" fill="#8f8f8f"/>
<rect x="47" y="1084.7" width="4.5" height="1.6" fill="#000"/>
<text x="46.5" y="1092.5" font-size="19" text-anchor="end" fill="#fff" stroke="#fff" stroke-width="0.3" font-family='"Liberation Sans", sans-serif'>55</text>
<rect x="52" y="882.1" width="1843" height="222.10000000000002" fill="none" stroke="#8f8f8f" stroke-width="1.8"/>
<rect x="52.0" y="1105.1000000000001" width="2" height="4.5" fill="#000"/>
<text x="53.5" y="1131.0" font-size="19.5" text-anchor="middle" textLength="70.8" lengthAdjust="spacingAndGlyphs" fill="#fff" stroke="#fff" stroke-width="0.3" font-family='"Liberation Sans", sans-serif'>00:00:00</text>
<rect x="117.5" y="1105.1000000000001" width="2" height="4.5" fill="#000"/>
<text x="119.0" y="1156.3" font-size="19.5" text-anchor="middle" textLength="70.8" lengthAdjust="spacingAndGlyphs" fill="#fff" stroke="#fff" stroke-width="0.3" font-family='"Liberation Sans", sans-serif'>00:00:30</text>
<rect x="183.0" y="1105.1000000000001" width="2" height="4.5" fill="#000"/>
<text x="184.5" y="1131.0" font-size="19.5" text-anchor="middle" textLength="70.8" lengthAdjust="spacingAndGlyphs" fill="#fff" stroke="#fff" stroke-width="0.3" font-family='"Liberation Sans", sans-serif'>00:01:00</text>
<rect x="248.5" y="1105.1000000000001" width="2" height="4.5" fill="#000"/>
<text x="250.0" y="1156.3" font-size="19.5" text-anchor="middle" textLength="70.8" lengthAdjust="spacingAndGlyphs" fill="#fff" stroke="#fff" stroke-width="0.3" font-family='"Liberation Sans", sans-serif'>00:01:30</text>
<rect x="314.0" y="1105.1000000000001" width="2" height="4.5" fill="#000"/>
<text x="315.5" y="1131.0" font-size="19.5" text-anchor="middle" textLength="70.8" lengthAdjust="spacingAndGlyphs" fill="#fff" stroke="#fff" stroke-width="0.3" font-family='"Liberation Sans", sans-serif'>00:02:00</text>
<rect x="379.5" y="1105.1000000000001" width="2" height="4.5" fill="#000"/>
<text x="381.0" y="1156.3" font-size="19.5" text-anchor="middle" textLength="70.8" lengthAdjust="spacingAndGlyphs" fill="#fff" stroke="#fff" stroke-width="0.3" font-family='"Liberation Sans", sans-serif'>00:02:30</text>
<rect x="445.0" y="1105.1000000000001" width="2" height="4.5" fill="#000"/>
<text x="446.5" y="1131.0" font-size="19.5" text-anchor="middle" textLength="70.8" lengthAdjust="spacingAndGlyphs" fill="#fff" stroke="#fff" stroke-width="0.3" font-family='"Liberation Sans", sans-serif'>00:03:00</text>
<rect x="510.5" y="1105.1000000000001" width="2" height="4.5" fill="#000"/>
<text x="512.0" y="1156.3" font-size="19.5" text-anchor="middle" textLength="70.8" lengthAdjust="spacingAndGlyphs" fill="#fff" stroke="#fff" stroke-width="0.3" font-family='"Liberation Sans", sans-serif'>00:03:30</text>
<rect x="576.0" y="1105.1000000000001" width="2" height="4.5" fill="#000"/>
<text x="577.5" y="1131.0" font-size="19.5" text-anchor="middle" textLength="70.8" lengthAdjust="spacingAndGlyphs" fill="#fff" stroke="#fff" stroke-width="0.3" font-family='"Liberation Sans", sans-serif'>00:04:00</text>
<rect x="641.5" y="1105.1000000000001" width="2" height="4.5" fill="#000"/>
<text x="643.0" y="1156.3" font-size="19.5" text-anchor="middle" textLength="70.8" lengthAdjust="spacingAndGlyphs" fill="#fff" stroke="#fff" stroke-width="0.3" font-family='"Liberation Sans", sans-serif'>00:04:30</text>
<rect x="707.0" y="1105.1000000000001" width="2" height="4.5" fill="#000"/>
<text x="708.5" y="1131.0" font-size="19.5" text-anchor="middle" textLength="70.8" lengthAdjust="spacingAndGlyphs" fill="#fff" stroke="#fff" stroke-width="0.3" font-family='"Liberation Sans", sans-serif'>00:05:00</text>
<rect x="772.5" y="1105.1000000000001" width="2" height="4.5" fill="#000"/>
<text x="774.0" y="1156.3" font-size="19.5" text-anchor="middle" textLength="70.8" lengthAdjust="spacingAndGlyphs" fill="#fff" stroke="#fff" stroke-width="0.3" font-family='"Liberation Sans", sans-serif'>00:05:30</text>
<rect x="838.0" y="1105.1000000000001" width="2" height="4.5" fill="#000"/>
<text x="839.5" y="1131.0" font-size="19.5" text-anchor="middle" textLength="70.8" lengthAdjust="spacingAndGlyphs" fill="#fff" stroke="#fff" stroke-width="0.3" font-family='"Liberation Sans", sans-serif'>00:06:00</text>
<rect x="903.5" y="1105.1000000000001" width="2" height="4.5" fill="#000"/>
<text x="905.0" y="1156.3" font-size="19.5" text-anchor="middle" textLength="70.8" lengthAdjust="spacingAndGlyphs" fill="#fff" stroke="#fff" stroke-width="0.3" font-family='"Liberation Sans", sans-serif'>00:06:30</text>
<rect x="969.0" y="1105.1000000000001" width="2" height="4.5" fill="#000"/>
<text x="970.5" y="1131.0" font-size="19.5" text-anchor="middle" textLength="70.8" lengthAdjust="spacingAndGlyphs" fill="#fff" stroke="#fff" stroke-width="0.3" font-family='"Liberation Sans", sans-serif'>00:07:00</text>
<rect x="1034.5" y="1105.1000000000001" width="2" height="4.5" fill="#000"/>
<text x="1036.0" y="1156.3" font-size="19.5" text-anchor="middle" textLength="70.8" lengthAdjust="spacingAndGlyphs" fill="#fff" stroke="#fff" stroke-width="0.3" font-family='"Liberation Sans", sans-serif'>00:07:30</text>
<rect x="1100.0" y="1105.1000000000001" width="2" height="4.5" fill="#000"/>
<text x="1101.5" y="1131.0" font-size="19.5" text-anchor="middle" textLength="70.8" lengthAdjust="spacingAndGlyphs" fill="#fff" stroke="#fff" stroke-width="0.3" font-family='"Liberation Sans", sans-serif'>00:08:00</text>
<rect x="1165.5" y="1105.1000000000001" width="2" height="4.5" fill="#000"/>
<text x="1167.0" y="1156.3" font-size="19.5" text-anchor="middle" textLength="70.8" lengthAdjust="spacingAndGlyphs" fill="#fff" stroke="#fff" stroke-width="0.3" font-family='"Liberation Sans", sans-serif'>00:08:30</text>
<rect x="1231.0" y="1105.1000000000001" width="2" height="4.5" fill="#000"/>
<text x="1232.5" y="1131.0" font-size="19.5" text-anchor="middle" textLength="70.8" lengthAdjust="spacingAndGlyphs" fill="#fff" stroke="#fff" stroke-width="0.3" font-family='"Liberation Sans", sans-serif'>00:09:00</text>
<rect x="1296.5" y="1105.1000000000001" width="2" height="4.5" fill="#000"/>
<text x="1298.0" y="1156.3" font-size="19.5" text-anchor="middle" textLength="70.8" lengthAdjust="spacingAndGlyphs" fill="#fff" stroke="#fff" stroke-width="0.3" font-family='"Liberation Sans", sans-serif'>00:09:30</text>
<rect x="1362.0" y="1105.1000000000001" width="2" height="4.5" fill="#000"/>
<text x="1363.5" y="1131.0" font-size="19.5" text-anchor="middle" textLength="70.8" lengthAdjust="spacingAndGlyphs" fill="#fff" stroke="#fff" stroke-width="0.3" font-family='"Liberation Sans", sans-serif'>00:10:00</text>
<rect x="1427.5" y="1105.1000000000001" width="2" height="4.5" fill="#000"/>
<text x="1429.0" y="1156.3" font-size="19.5" text-anchor="middle" textLength="70.8" lengthAdjust="spacingAndGlyphs" fill="#fff" stroke="#fff" stroke-width="0.3" font-family='"Liberation Sans", sans-serif'>00:10:30</text>
<rect x="1493.0" y="1105.1000000000001" width="2" height="4.5" fill="#000"/>
<text x="1494.5" y="1131.0" font-size="19.5" text-anchor="middle" textLength="70.8" lengthAdjust="spacingAndGlyphs" fill="#fff" stroke="#fff" stroke-width="0.3" font-family='"Liberation Sans", sans-serif'>00:11:00</text>
<rect x="1558.5" y="1105.1000000000001" width="2" height="4.5" fill="#000"/>
<text x="1560.0" y="1156.3" font-size="19.5" text-anchor="middle" textLength="70.8" lengthAdjust="spacingAndGlyphs" fill="#fff" stroke="#fff" stroke-width="0.3" font-family='"Liberation Sans", sans-serif'>00:11:30</text>
<rect x="1624.0" y="1105.1000000000001" width="2" height="4.5" fill="#000"/>
<text x="1625.5" y="1131.0" font-size="19.5" text-anchor="middle" textLength="70.8" lengthAdjust="spacingAndGlyphs" fill="#fff" stroke="#fff" stroke-width="0.3" font-family='"Liberation Sans", sans-serif'>00:12:00</text>
<rect x="1689.5" y="1105.1000000000001" width="2" height="4.5" fill="#000"/>
<text x="1691.0" y="1156.3" font-size="19.5" text-anchor="middle" textLength="70.8" lengthAdjust="spacingAndGlyphs" fill="#fff" stroke="#fff" stroke-width="0.3" font-family='"Liberation Sans", sans-serif'>00:12:30</text>
<rect x="1755.0" y="1105.1000000000001" width="2" height="4.5" fill="#000"/>
<text x="1756.5" y="1131.0" font-size="19.5" text-anchor="middle" textLength="70.8" lengthAdjust="spacingAndGlyphs" fill="#fff" stroke="#fff" stroke-width="0.3" font-family='"Liberation Sans", sans-serif'>00:13:00</text>
<rect x="1820.5" y="1105.1000000000001" width="2" height="4.5" fill="#000"/>
<text x="1822.0" y="1156.3" font-size="19.5" text-anchor="middle" textLength="70.8" lengthAdjust="spacingAndGlyphs" fill="#fff" stroke="#fff" stroke-width="0.3" font-family='"Liberation Sans", sans-serif'>00:13:30</text>
<rect x="1886.0" y="1105.1000000000001" width="2" height="4.5" fill="#000"/>
<text x="1887.5" y="1131.0" font-size="19.5" text-anchor="middle" textLength="70.8" lengthAdjust="spacingAndGlyphs" fill="#fff" stroke="#fff" stroke-width="0.3" font-family='"Liberation Sans", sans-serif'>00:14:00</text>
<polyline points="55.0,1037.3 60.0,1012.4 64.9,999.4 68.9,1021.4 77.9,1008.4 81.9,1071.1 86.8,1083.1 90.8,969.6 95.8,978.5 99.8,991.5 112.7,982.5 116.7,1009.4 121.7,1094.0 125.7,985.5 130.6,952.7 134.6,981.5 138.6,982.5 152.5,977.5 156.5,1078.1 160.5,1037.3 165.5,949.7 169.5,963.6 174.5,978.5 187.4,974.6 196.4,1084.1 200.3,957.6 204.3,946.7 209.3,972.6 213.3,972.6 226.2,967.6 230.2,1060.2 235.2,1029.3 239.2,940.7 248.1,969.6 261.1,965.6 265.1,1001.4 270.0,1076.1 274.0,955.6 279.0,936.7 283.0,963.6 287.0,964.6 296.9,962.6 300.9,966.6 304.9,1065.2 313.8,932.7 318.8,952.7 322.8,962.6 335.7,959.6 343.7,1063.2 348.7,935.7 352.7,934.7 357.6,958.6 370.0,956.6 375.0,970.6 379.0,1065.2 387.9,924.8 392.9,951.7 396.9,955.6 409.8,952.7 413.8,1020.4 418.8,1040.3 422.8,927.8 427.7,933.7 431.7,953.6 444.7,952.7 449.6,972.6 453.6,1066.2 457.6,973.6 462.6,918.8 466.6,948.7 475.5,950.7 483.5,947.7 488.5,1029.3 492.5,1021.4 496.4,921.8 501.4,931.7 505.4,948.7 518.3,945.7 523.3,977.5 527.3,1056.2 532.3,937.7 536.3,918.8 541.2,946.7 544.2,947.7 556.2,944.7 558.2,946.7 562.2,1045.2 571.1,914.8 576.1,937.7 581.1,945.7 593.0,942.7 602.0,1048.2 606.0,921.8 610.9,919.8 614.9,943.7 627.9,942.7 632.8,953.6 636.8,1049.2 645.8,910.8 650.8,938.7 654.7,943.7 667.7,940.7 671.7,1005.4 676.7,1027.3 680.6,914.8 685.6,921.8 690.0,940.7 702.9,938.7 707.9,960.6 710.9,1050.2 714.9,945.7 719.9,906.9 724.8,937.7 728.8,939.7 741.8,936.7 745.8,1021.4 749.7,1003.4 754.7,909.8 763.7,938.7 776.6,936.7 781.6,967.6 785.6,1047.2 789.6,927.8 793.5,909.8 798.5,937.7 802.5,938.7 810.5,936.7 815.4,937.7 820.4,1037.3 829.4,905.9 833.4,925.8 838.3,936.7 850.3,933.7 855.3,973.6 859.3,1039.3 864.2,912.8 868.2,910.8 873.2,935.7 884.1,933.7 890.1,943.7 895.1,1039.3 903.1,902.9 908.0,930.8 913.0,935.7 925.0,931.7 928.9,993.5 933.9,1022.3 938.9,905.9 942.9,911.8 947.9,933.7 959.8,931.7 964.8,948.7 968.8,1043.3 977.7,900.9 981.7,931.7 986.7,933.7 998.6,930.8 1003.6,1010.4 1007.6,998.5 1012.0,901.9 1017.0,917.8 1021.9,931.7 1025.9,932.7 1029.9,930.8 1033.9,930.8 1038.9,964.6 1042.9,1038.3 1047.8,923.8 1051.8,903.9 1055.8,929.8 1060.8,932.7 1073.7,928.8 1077.7,1028.3 1086.7,899.9 1090.6,919.8 1095.6,930.8 1108.6,927.8 1113.5,979.5 1117.5,1037.3 1121.5,911.8 1125.5,902.9 1130.5,928.8 1134.5,930.8 1143.4,928.8 1147.4,932.7 1151.4,1031.3 1156.4,957.6 1161.3,897.9 1165.3,920.8 1169.3,928.8 1182.2,926.8 1191.2,1032.3 1195.2,903.9 1200.2,903.9 1204.1,927.8 1217.1,927.8 1222.1,938.7 1226.0,1036.3 1235.0,896.9 1240.0,923.8 1244.0,928.8 1256.9,926.8 1265.9,1022.3 1269.9,902.9 1273.8,904.9 1278.8,929.8 1290.8,927.8 1296.7,944.7 1300.7,1036.3 1309.7,895.9 1313.7,922.8 1317.6,928.8 1330.0,925.8 1335.0,993.5 1340.0,1008.4 1344.9,899.9 1348.9,909.8 1352.9,926.8 1365.8,925.8 1370.8,946.7 1374.8,1038.3 1378.8,941.7 1382.8,940.7 1387.7,894.9 1392.7,924.8 1396.7,926.8 1405.7,924.8 1409.6,1001.4 1414.6,1002.4 1418.6,1005.4 1422.6,899.9 1427.6,909.8 1431.6,927.8 1444.5,925.8 1448.5,1038.3 1453.5,1038.3 1457.4,927.8 1462.4,897.9 1467.4,926.8 1473.4,927.8 1484.3,924.8 1488.3,1009.4 1493.3,995.5 1497.3,897.9 1505.2,927.8 1518.2,925.8 1523.2,955.6 1527.1,1036.3 1532.1,925.8 1537.1,895.9 1541.1,924.8 1547.0,926.8 1558.0,923.8 1563.0,1017.4 1567.0,982.5 1571.9,896.9 1576.9,913.8 1580.9,924.8 1587.9,926.8 1592.8,924.8 1597.8,963.6 1601.8,1033.3 1607.0,909.8 1611.0,897.9 1614.9,924.8 1627.9,924.8 1632.9,926.8 1636.8,1026.3 1645.8,894.9 1650.8,914.8 1654.8,925.8 1667.7,923.8 1676.7,1028.3 1680.6,902.9 1684.6,901.9 1689.6,925.8 1701.6,923.8 1707.5,931.7 1711.5,1027.3 1720.5,893.9 1724.5,915.8 1729.4,924.8 1742.4,921.8 1751.3,1019.4 1755.3,898.9 1759.3,901.9 1764.3,922.8 1768.3,924.8 1776.2,922.8 1781.2,934.7 1786.2,1030.3 1794.1,889.9 1799.1,920.8 1803.1,922.8 1816.0,921.8 1820.0,990.5 1825.0,1009.4 1830.0,896.9 1834.0,903.9 1838.9,922.8 1850.9,922.8 1855.9,940.7 1859.9,1033.3 1864.8,927.8 1868.8,891.9 1873.8,921.8 1878.8,923.8 1890.7,921.8" fill="none" stroke="#cc1d22" stroke-width="1.9" stroke-linejoin="round"/>
</svg>
</body></html>
